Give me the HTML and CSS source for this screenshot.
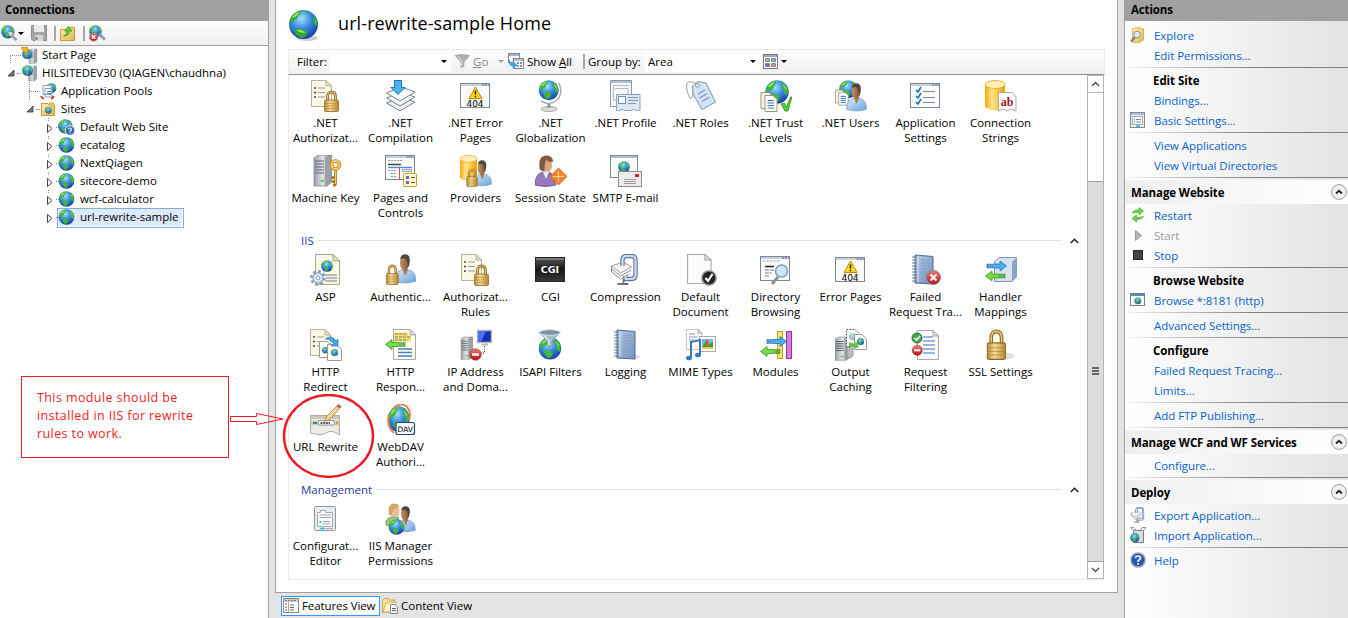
FILE: index.html
```html
<!DOCTYPE html>
<html lang="en">
<head>
<meta charset="utf-8">
<title>Internet Information Services (IIS) Manager</title>
<link rel="stylesheet" href="styles.css">
</head>
<body>
<svg class="defs" width="0" height="0">
  <defs>
    <radialGradient id="sea" cx=".42" cy=".3" r=".75"><stop offset="0" stop-color="#a4e2fb"/><stop offset=".45" stop-color="#3a8ce0"/><stop offset="1" stop-color="#1434a0"/></radialGradient>
    <linearGradient id="gold" x2="1"><stop offset="0" stop-color="#b48a36"/><stop offset=".4" stop-color="#f6dc94"/><stop offset="1" stop-color="#b88632"/></linearGradient>
    <linearGradient id="yel" x2="1"><stop offset="0" stop-color="#f2a90c"/><stop offset=".35" stop-color="#ffe68a"/><stop offset="1" stop-color="#eda000"/></linearGradient>
    <linearGradient id="steel" x2="1"><stop offset="0" stop-color="#9ba2a8"/><stop offset=".5" stop-color="#e3e6e9"/><stop offset="1" stop-color="#6e767c"/></linearGradient>
    <linearGradient id="skin" x2="1"><stop offset="0" stop-color="#c79366"/><stop offset="1" stop-color="#7d5230"/></linearGradient>
    <linearGradient id="shirt" x2="1" y2="1"><stop offset="0" stop-color="#d6eafb"/><stop offset="1" stop-color="#6ba3da"/></linearGradient>
    <linearGradient id="bk" x2="1" y2="1"><stop offset="0" stop-color="#b4c8e2"/><stop offset="1" stop-color="#7391bd"/></linearGradient>
    <linearGradient id="red" y2="1" x2="0"><stop offset="0" stop-color="#ee7a70"/><stop offset="1" stop-color="#b80f16"/></linearGradient>
    <linearGradient id="dark" y2="1" x2="0"><stop offset="0" stop-color="#5a5a5a"/><stop offset=".5" stop-color="#161616"/><stop offset="1" stop-color="#3a3a3a"/></linearGradient>
    <linearGradient id="fold" x2="1" y2="1"><stop offset="0" stop-color="#fff0b4"/><stop offset="1" stop-color="#e2b44c"/></linearGradient>
    <g id="globe"><circle cx="8" cy="8" r="7.800" fill="url(#sea)"/><path d="M1 5Q3 1 7 .6Q8 2.500 6 4Q6 6 4 6.500Q2.500 8 .8 8ZM4 9.500Q8 8.500 10 11Q9 14.500 7 15Q4 13.500 4 9.500ZM10.500 1.200Q14 3 15.200 6Q15.500 9 14.500 10.500Q12 9 12.500 6.500Q10.500 4 10.500 1.200Z" fill="#3fb83a"/><path d="M2 4.500Q4 1.500 6.500 1.400Q5 3.600 3.500 4.600ZM12 2.600Q14 4.500 14.500 6.500Q13 6 12 2.600Z" fill="#9be26c"/></g>
    <g id="lock"><path d="M4 10V6Q4 1 8 1T12 6V10" fill="none" stroke="#8c641c" stroke-width="2.800"/><path d="M4 10V6Q4 1 8 1T12 6V10" fill="none" stroke="#e8c878" stroke-width="1.200"/><rect x="1" y="9" width="14" height="11.500" rx="1.500" fill="url(#gold)" stroke="#8f6a26" stroke-width=".8"/><path d="M1.500 12.500H14.500M1.500 15H14.500M1.500 17.500H14.500" stroke="#b08840" stroke-width=".6"/></g>
    <g id="page"><path d="M.5.5H16L21.500 6V29.500H.5Z" fill="#fbfbfb" stroke="#a9a9a9"/><path d="M16 .5V6H21.500Z" fill="#dedede" stroke="#a9a9a9"/></g>
    <g id="listpage"><path d="M.5.5H15L20.500 6V26.500H.5Z" fill="#fbf7e6" stroke="#b9b29a"/><path d="M15 .5V6H20.500Z" fill="#e6dfc4" stroke="#b9b29a"/><path d="M3 8H5M3 12.500H5M3 17H5" stroke="#444" stroke-width="1.500"/><path d="M7 8H14M7 12.500H14M7 17H14" stroke="#999"/></g>
    <g id="person"><path d="M0 23Q0 15 7 13.500H14Q21 15 21 23Q10 26 0 23Z" fill="url(#shirt)" stroke="#5f8fc0" stroke-width=".6"/><path d="M7.500 12.500L10.500 18.500 13.500 12.500Z" fill="#a97a50"/><ellipse cx="9.800" cy="7.500" rx="4.500" ry="6.300" fill="url(#skin)"/><path d="M5.600 4.500Q6 .3 10.500.3Q15.800.6 15 6.500Q14.600 10 13.200 11.500Q13 6.500 11.500 4.500Q9 2.500 5.600 4.500Z" fill="#4c443f"/></g>
    <g id="server"><path d="M0 3L4 0H16V27L12 31H0Z" fill="url(#steel)" stroke="#697077" stroke-width=".6"/><path d="M10 3L16 0V27L10 31Z" fill="#9aa2a8"/><path d="M1 6H9M1 9H9M1 12H9M1 15H9M1 18H9" stroke="#5f666d" stroke-width="1.200"/><rect x="6" y="25" width="3" height="2" fill="#5fd33a"/></g>
    <g id="win"><rect x=".5" y=".5" width="29" height="24" fill="#fbfbfc" stroke="#7c8798"/><path d="M1 2H29" stroke="#c9d1de" stroke-width="2"/><path d="M22 2H24M25 2H27M28 2H29" stroke="#465a78"/></g>
    <g id="warn"><path d="M7 1L13.500 12.500H.5Z" fill="#ffd91e" stroke="#c28c00"/><path d="M7 4.500V8.500M7 9.800V11.300" stroke="#222" stroke-width="1.500"/></g>
    <g id="book"><path d="M3 1L21 2.500V30L3 29Z" fill="url(#bk)" stroke="#4f6a96"/><path d="M6 2V28" stroke="#dbe6f4"/><path d="M9 6H18M9 9H18M9 12H18M9 15H18M9 18H18M9 21H18" stroke="#86a0c8"/><path d="M0 3H5M0 6H5M0 9H5M0 12H5M0 15H5M0 18H5M0 21H5M0 24H5M0 27H5" stroke="#6d7888"/></g>
    <g id="arrR"><path d="M0 3.500H1.500V7.500H0ZM2.800 3.500H4.300V7.500H2.800ZM5.600 3.500H13V.5L19.500 5.500L13 10.500V7.500H5.600Z" fill="#46b2f2" stroke="#1467a8" stroke-width=".7"/></g>
    <g id="arrL"><path d="M20 3.500H18.500V7.500H20ZM17.200 3.500H15.700V7.500H17.200ZM14.400 3.500H7V.5L.5 5.500L7 10.500V7.500H14.400Z" fill="#74dc46" stroke="#2f8a18" stroke-width=".7"/></g>
    <g id="db"><path d="M0 4V27Q10 34 20 27V4Z" fill="url(#yel)"/><ellipse cx="10" cy="4.500" rx="10" ry="4" fill="#fff0b8" stroke="#e6a818" stroke-width=".8"/></g>
    <g id="clamp"><path d="M0 12L12 8L20 13L9 19Z" fill="#f6f6f6" stroke="#888" stroke-width=".8"/><path d="M0 12V15L9 22L20 16M0 15V18L9 25L18 20" fill="none" stroke="#888"/><path d="M11 12V6Q11 2 15 2H20Q24 2 24 6V21Q24 25 20 25H14V22" fill="none" stroke="#6079a0" stroke-width="4.400"/><path d="M11 12V6Q11 2 15 2H20Q24 2 24 6V21Q24 25 20 25H14V22" fill="none" stroke="#cfdcec" stroke-width="2.200"/><path d="M6 30H17M12 25V30" stroke="#6a7074" stroke-width="1.800"/></g>
    <g id="docs"><path d="M0 0H8L12 4V16H0Z" fill="#f8f4e4" stroke="#9e947b"/><path d="M4 3H12L16 7V19H4Z" fill="#fff" stroke="#9e947b"/><path d="M6.500 8H13M6.500 10.500H13M6.500 13H13M6.500 15.500H13" stroke="#3572b8" stroke-width="1.200"/></g>
    <g id="no"><circle cx="6" cy="6" r="5.800" fill="url(#red)" stroke="#9b1c1c" stroke-width=".5"/><path d="M2.500 6H9.500" stroke="#fff" stroke-width="2.400"/></g>
    <g id="cross"><circle cx="7" cy="7" r="7" fill="url(#red)" stroke="#888"/><path d="M4 4L10 10M10 4L4 10" stroke="#fff" stroke-width="2.200"/></g>
    <g id="cfg"><rect x=".5" y=".5" width="21" height="24" rx="1" fill="#e9ecef" stroke="#8e979f"/><path d="M3.500 6.500H6.500V4.500H11.500V6.500H18.500V20.500H3.500Z" fill="#fff" stroke="#a2abb4"/><path d="M5.500 9H17M5.500 11.500H17M8.500 15.500H16M8.500 18H16" stroke="#96a2ae"/><path d="M5.500 16H7" stroke="#17a6d8" stroke-width="2"/><path d="M6 22.500H11" stroke="#18bfe8" stroke-width="1.500"/><path d="M12 22.500H19" stroke="#aaa"/></g>
    <g id="coll"><circle cx="8" cy="8" r="7.400" fill="#f1f1f1" stroke="#9a9a9a"/><path d="M5 9.500L8 6.800L11 9.500" fill="none" stroke="#222" stroke-width="1.800"/></g>
    <g id="arrow-closed"><path d="M.5.5L5 4.500L.5 8.500Z" fill="#fff" stroke="#444"/></g>
    <g id="arrow-open"><path d="M6 0V6H0Z" fill="#777" stroke="#333" stroke-width=".8"/></g>
  </defs>
</svg>

<div class="app">
  <aside class="connections">
    <h2 class="pane-title">Connections</h2>
    <div class="conn-tools">
      <svg width="17" height="17" viewBox="0 0 17 17"><use href="#globe" transform="scale(.85)"/><path d="M10 10L15.500 15" stroke="#8ba0a8" stroke-width="2.500"/><path d="M6.500 7.500L10 6L12.500 9L9.500 12Z" fill="#cfd8da" stroke="#77888e" stroke-width=".7"/></svg>
      <i class="caret"></i>
      <svg class="save" width="16" height="16" viewBox="0 0 16 16"><path d="M.5.5H15.500V15.500H2L.5 14Z" fill="#a4a4a4" stroke="#8c8c8c"/><path d="M3 0H13V7H3Z" fill="#ececec"/><path d="M4 10H12V16H4Z" fill="#d5d5d5"/><path d="M5.500 12V15" stroke="#777" stroke-width="2"/></svg>
      <i class="sep"></i>
      <svg class="up" width="15" height="15" viewBox="0 0 15 15"><path d="M.5 3.500H6L8 1.500H14.500V14.500H.5Z" fill="url(#fold)" stroke="#c99b34"/><path d="M3.500 10Q7 9 7 5H4.500L8.500.5L12 5H9.500Q9 10 3.500 10Z" fill="#5cc935" stroke="#2e8a18" stroke-width=".6"/></svg>
      <i class="sep"></i>
      <svg class="del" width="17" height="17" viewBox="0 0 17 17"><use href="#globe" transform="scale(.8)"/><path d="M10 9L16 14.500" stroke="#8ba0a8" stroke-width="2.800"/><use href="#cross" transform="translate(.5 8) scale(.58)"/></svg>
    </div>
    <ul class="tree">
      <li class="lv0 root"><svg width="17" height="17" viewBox="0 0 17 17"><use href="#server" transform="translate(8 2) scale(.5 .47)"/><use href="#globe" transform="translate(1 2) scale(.64)"/><path d="M0 0.500H7L6.500 6L3 5Z" fill="#f7b522" stroke="#c17b0c" stroke-width=".7"/></svg><span>Start Page</span></li>
      <li class="lv0 open0"><svg class="tw" width="7" height="7" viewBox="0 0 7 7"><use href="#arrow-open"/></svg><svg width="17" height="17" viewBox="0 0 17 17"><use href="#server" transform="translate(7.500 1) scale(.5 .48)"/><use href="#globe" transform="translate(1 0) scale(.68)"/></svg><span>HILSITEDEV30 (QIAGEN\chaudhna)</span></li>
      <li class="lv1 pools"><svg width="17" height="17" viewBox="0 0 17 17"><use href="#globe" transform="translate(6 0) scale(.65)"/><path d="M3 2.500H11V11.500H3ZM5 5.500H12V14H5Z" fill="#f8fafc" stroke="#8aa0b8"/><path d="M7 8.500H11M7 10.500H11" stroke="#4d7fb5"/><path d="M1 13Q2 15.500 4 15.500M13.500 13Q13 15.500 11 15.500" fill="none" stroke="#d13a2e" stroke-width="2"/></svg><span>Application Pools</span></li>
      <li class="lv1 open1"><svg class="tw" width="7" height="7" viewBox="0 0 7 7"><use href="#arrow-open"/></svg><svg width="17" height="17" viewBox="0 0 17 17"><path d="M1.500 2.500H8L9 4H14.500V14.500H1.500Z" fill="url(#fold)" stroke="#c99b34"/><path d="M9 2.500H14" stroke="#e2b44c" stroke-width="2"/><use href="#globe" transform="translate(5 6) scale(.42)"/></svg><span>Sites</span></li>
      <li class="lv2"><svg class="tw" width="6" height="9" viewBox="0 0 6 9"><use href="#arrow-closed"/></svg><svg width="17" height="17" viewBox="0 0 17 17"><use href="#globe" transform="scale(.92)"/><circle cx="12" cy="11.500" r="4.800" fill="#3e68b8" stroke="#e8eefa"/><path d="M10.500 10.300Q10.500 9 12 9T13.500 10.400Q13.500 11 12 12V13M12 13.700V14.600" fill="none" stroke="#fff" stroke-width="1.100"/></svg><span>Default Web Site</span></li>
      <li class="lv2"><svg class="tw" width="6" height="9" viewBox="0 0 6 9"><use href="#arrow-closed"/></svg><svg width="17" height="17" viewBox="-.5 0 17 17"><use href="#globe"/></svg><span>ecatalog</span></li>
      <li class="lv2"><svg class="tw" width="6" height="9" viewBox="0 0 6 9"><use href="#arrow-closed"/></svg><svg width="17" height="17" viewBox="-.5 0 17 17"><use href="#globe"/></svg><span>NextQiagen</span></li>
      <li class="lv2"><svg class="tw" width="6" height="9" viewBox="0 0 6 9"><use href="#arrow-closed"/></svg><svg width="17" height="17" viewBox="-.5 0 17 17"><use href="#globe"/></svg><span>sitecore-demo</span></li>
      <li class="lv2"><svg class="tw" width="6" height="9" viewBox="0 0 6 9"><use href="#arrow-closed"/></svg><svg width="17" height="17" viewBox="-.5 0 17 17"><use href="#globe"/></svg><span>wcf-calculator</span></li>
      <li class="lv2 selected"><svg class="tw" width="6" height="9" viewBox="0 0 6 9"><use href="#arrow-closed"/></svg><svg width="17" height="17" viewBox="-.5 0 17 17"><use href="#globe"/></svg><span>url-rewrite-sample</span></li>
    </ul>
  </aside>

  <section class="center">
    <main class="home">
      <header class="home-head">
        <svg width="32" height="33" viewBox="0 0 32 33"><ellipse cx="19" cy="29" rx="11" ry="3" fill="#bbb" opacity=".7"/><g transform="translate(1 1)"><circle cx="14.500" cy="14.500" r="14.500" fill="url(#sea)"/><path d="M1 9Q5 1 13 .5Q12 4 9 6Q8 9 5 10Q2 13 .3 14ZM5 20Q10 16 19 22Q18 27 13 28Q6 26 5 20ZM19 .8Q21 2 20 4L16 2ZM25 6Q29 11 28.500 16Q24 16 24 11Z" fill="#35a832"/><path d="M3 8Q6 2 11 2Q8 6 4 8ZM8 20Q13 19 16 23Q11 23 8 20ZM26 9Q28 12 27 14Z" fill="#a0e468"/></g></svg>
        <h1>url-rewrite-sample Home</h1>
      </header>
      <div class="filter">
        <span class="f-label">Filter:</span>
        <span class="combo find"><i class="caret"></i></span>
        <svg class="funnel" width="15" height="14" viewBox="0 0 15 14"><path d="M0 1.500Q7 -.5 14.500 1.500L9 8V12.500L6 13.500V8Z" fill="#b0b0b0" stroke="#999" stroke-width=".6"/><path d="M3 2L7 7V12" stroke="#e6e6e6" fill="none"/></svg>
        <span class="go"><u>G</u>o</span>
        <i class="caret dim"></i>
        <svg class="all" width="16" height="16" viewBox="0 0 16 16"><rect x=".5" y=".5" width="11" height="9" fill="#fff" stroke="#7d8794"/><path d="M1 2H11" stroke="#a8b4c4" stroke-width="2"/><rect x="5.500" y="5.500" width="10" height="10" fill="#fff" stroke="#7d8794"/><path d="M6 7H15" stroke="#b6c1d0" stroke-width="2"/><path d="M9 10H11M12 10H14M9 13H11M12 13H14" stroke="#556ea8" stroke-width="1.600"/><path d="M1 7Q2 11 5 11V8.500L9 12L5 15.500V13Q1 13 1 7Z" fill="#38a6e6" stroke="#1878b8" stroke-width=".5"/></svg>
        <span class="show">Show <u>A</u>ll</span>
        <i class="sep"></i>
        <span class="by">Group by:</span>
        <span class="combo area">Area<i class="caret"></i></span>
        <svg class="view" width="15" height="15" viewBox="0 0 15 15"><rect x=".5" y=".5" width="14" height="14" fill="#fff" stroke="#70798a"/><path d="M1 2H14" stroke="#9aa8bd" stroke-width="2"/><path d="M2.500 4.500H6.500V7.500H2.500Z" fill="#b8c880" stroke="#888"/><path d="M8.500 4.500H12.500V7.500H8.500Z" fill="#77bce4" stroke="#888"/><path d="M2.500 9.500H6.500V12.500H2.500Z" fill="#7668c4" stroke="#888"/><path d="M8.500 9.500H12.500V12.500H8.500Z" fill="#e09078" stroke="#888"/></svg>
        <i class="caret"></i>
      </div>
      <div class="features">
        <div class="list">
          <div class="grid">
            <div class="item"><svg class="ic" viewBox="0 0 32 32"><use href="#listpage" x="1"/><use href="#lock" x="13.500" y="11"/></svg>.NET<br>Authorizat...</div>
            <div class="item"><svg class="ic" viewBox="0 0 32 32"><path d="M1.500 23L16 17L30 22L15 31Z" fill="#eceff2" stroke="#76818c"/><path d="M1.500 18L16 12L30 17L15 26Z" fill="#f6f8fa" stroke="#76818c"/><path d="M1.500 13L16 7L30 12L15 21Z" fill="#fff" stroke="#76818c"/><path d="M9.500 .5H16.500V7.500H20L13 14.500L6 7.500H9.500Z" fill="#4db4ec" stroke="#1878b8"/></svg>.NET<br>Compilation</div>
            <div class="item"><svg class="ic" viewBox="0 0 32 32"><use href="#win" y="3"/><use href="#warn" x="8.500" y="6"/><text x="15" y="27" class="n404">404</text></svg>.NET Error<br>Pages</div>
            <div class="item"><svg class="ic" viewBox="0 0 32 32"><ellipse cx="14" cy="29" rx="8" ry="2.500" fill="#d8dadc" stroke="#a9adb0"/><path d="M24 3Q29 14 21 21Q14 26 6 21" fill="none" stroke="#a9aeb3" stroke-width="1.500"/><path d="M14 24V28" stroke="#999" stroke-width="3"/><use href="#globe" transform="translate(3.500 0) scale(1.280)"/></svg>.NET<br>Globalization</div>
            <div class="item"><svg class="ic" viewBox="0 0 32 32"><path d="M.5.5H21.500V26.500H.5Z" fill="#f4f6f9" stroke="#8b95a3"/><path d="M1 2H21" stroke="#b4bfd0" stroke-width="2"/><path d="M3.500 5.500H20M5 8.500H18V20H3.500V5" fill="none" stroke="#b5bcc6"/><path d="M6.500 14.500H30V30.500H26L24 29L22 30.500H14L12 29L10 30.500H6.500Z" fill="#dde8f3" stroke="#8ea5bf"/><rect x="8.500" y="16.500" width="7" height="7" fill="#fff" stroke="#6e8eb5"/><path d="M18 17.500H28M18 20.500H28M18 23.500H26" stroke="#7c98bd"/></svg>.NET Profile</div>
            <div class="item"><svg class="ic" viewBox="0 0 32 32"><path d="M12 4Q3 -1 1.500 5Q1.500 12 5 18Q9 19 8 10" fill="none" stroke="#a3b1c0" stroke-width="1.200"/><path d="M7.500 6L13 1.500L21 3L30.500 22L17 29.500L8 14Z" fill="#d3e3f2" stroke="#7893b2" stroke-linejoin="round"/><circle cx="12.500" cy="5.500" r="1.800" fill="#fff" stroke="#7893b2"/><path d="M13 14L20 10M14.500 18L22 13.500M17 21.500L24.500 17" stroke="#7a93cb" stroke-width="1.300"/></svg>.NET Roles</div>
            <div class="item"><svg class="ic" viewBox="0 0 32 32"><use href="#globe" transform="translate(5 0) scale(1.500)"/><use href="#docs" x="1" y="12.500"/><path d="M21 24L24.500 23L26.500 27L30.500 17H32L28 31H25Z" fill="#53cf2d" stroke="#25801a" stroke-width=".7"/></svg>.NET Trust<br>Levels</div>
            <div class="item"><svg class="ic" viewBox="0 0 32 32"><use href="#globe" transform="translate(4 0) scale(1.150)"/><use href="#docs" transform="translate(.5 10) scale(.8)"/><use href="#person" transform="translate(11.500 3) scale(.95 1.140)"/></svg>.NET Users</div>
            <div class="item"><svg class="ic" viewBox="0 0 32 32"><use href="#win" y="3"/><path d="M6 10L8 12L11 7M6 16L8 18L11 13M6 22L8 24L11 19" fill="none" stroke="#1477b8" stroke-width="1.700"/><path d="M13 11.500H25M13 17.500H25M13 22.500H25" stroke="#7b8798"/></svg>Application<br>Settings</div>
            <div class="item"><svg class="ic" viewBox="0 0 32 32"><use href="#db"/><path d="M13.500 12.500H27L31 17V31L26 29L22 31L18 29L13.500 31Z" fill="#fff" stroke="#aaa"/><text x="22" y="26" class="ab">ab</text></svg>Connection<br>Strings</div>
            <div class="item"><svg class="ic" viewBox="0 0 32 32"><use href="#server" transform="translate(4 0) scale(1.100 1)"/><path d="M25.500 14V29L23.500 31M25 22.500H21.500M25 26.500H22" fill="none" stroke="#a66c0c" stroke-width="2.600"/><path d="M25.500 14V29" stroke="#f8c860" stroke-width="1.200"/><circle cx="25.500" cy="10" r="4" fill="none" stroke="#b87812" stroke-width="3.600"/><circle cx="25.500" cy="10" r="4" fill="none" stroke="#ffd169" stroke-width="2"/></svg>Machine Key</div>
            <div class="item"><svg class="ic" viewBox="0 0 32 32"><use href="#win"/><path d="M3 5.500H17M3 15.500H12M6 18.500H12M6 21.500H12" stroke="#999" stroke-dasharray="2 1"/><path d="M3 9.500H16" stroke="#444" stroke-width="1.500"/><path d="M3 12.500H27" stroke="#4a8df0" stroke-width="1.400"/><path d="M14.500 12V24" stroke="#ee4a40"/><rect x="17.500" y="14.500" width="9" height="2" fill="none" stroke="#9ac"/><rect x="18.500" y="18.500" width="13" height="13" rx="1" fill="#fff7cc" stroke="#c6a02c"/><path d="M21 22.500H24M21 27.500H24" stroke="#7864a8" stroke-width="3"/><path d="M26 22.500H30M26 27.500H30" stroke="#555"/></svg>Pages and<br>Controls</div>
            <div class="item"><svg class="ic" viewBox="0 0 32 32"><use href="#db" transform="scale(.85)"/><use href="#person" transform="translate(13 5) scale(.88 1.050)"/><use href="#lock" transform="translate(6 14) scale(.75 .85)"/></svg>Providers</div>
            <div class="item"><svg class="ic" viewBox="0 0 32 32"><path d="M0 30Q0 19 8 17L16 18L21 30Q10 33 0 30Z" fill="#9a76ba" stroke="#7a5899"/><path d="M8 17L11 24L14 17Z" fill="#eee"/><ellipse cx="12.500" cy="10" rx="4.500" ry="7" fill="#dba87c"/><path d="M5 15Q2 .5 12 .5Q18 1 18 7Q13 7.500 11 4.500Q9 10 9.500 16.500Z" fill="#7c5a44"/><path d="M23.500 13L32 21.500L23.500 30L15 21.500Z" fill="#f5852d" stroke="#c9601a" stroke-width=".8"/><path d="M23.500 16V27M18 21.500H29" stroke="#ffd3a4"/></svg>Session State</div>
            <div class="item"><svg class="ic" viewBox="0 0 32 32"><rect x=".5" y=".5" width="27" height="22" fill="#fbfcfd" stroke="#7d8797"/><path d="M1 2H27" stroke="#b3bfd1" stroke-width="2"/><use href="#globe" transform="translate(8 6) scale(.75)"/><rect x="8.500" y="16.500" width="23" height="15" fill="#ececec" stroke="#8c8c8c"/><rect x="25" y="19" width="4" height="3" fill="#d9222a"/><path d="M14 24.500H26M14 26.500H26M14 28.500H26" stroke="#999"/></svg>SMTP E-mail</div>
          </div>
          <div class="group-head"><span>IIS</span><i></i><svg width="9" height="6" viewBox="0 0 9 6"><path d="M.8 5L4.500 1.300L8.200 5" fill="none" stroke="#222" stroke-width="1.600"/></svg></div>
          <div class="grid">
            <div class="item"><svg class="ic" viewBox="0 0 32 32"><path d="M5.500 .5H23L29.500 7V30.500H5.500Z" fill="#fbf8e6" stroke="#aaa58e"/><path d="M23 .5V7H29.500Z" fill="#e6dfc4" stroke="#aaa58e"/><use href="#globe" transform="translate(11 6) scale(.75)"/><path d="M14 21H27M16 24H27M16 27H27" stroke="#7a7a98" stroke-width="1.200"/><circle cx="8" cy="24" r="6.600" fill="none" stroke="#7f9ec0" stroke-width="2.600" stroke-dasharray="2.600 2.580"/><circle cx="8" cy="24" r="5" fill="#e6eff8" stroke="#8fadcd" stroke-width="1.500"/><circle cx="8" cy="24" r="2" fill="#fff" stroke="#7f9ec0"/></svg>ASP</div>
            <div class="item"><svg class="ic" viewBox="0 0 32 32"><use href="#person" transform="translate(9.500 0) scale(1.020 1.180)"/><use href="#lock" transform="translate(.5 11) scale(.85 .95)"/></svg>Authentic...</div>
            <div class="item"><svg class="ic" viewBox="0 0 32 32"><use href="#listpage" x="1"/><use href="#lock" x="13.500" y="11"/></svg>Authorizat...<br>Rules</div>
            <div class="item"><svg class="ic" viewBox="0 0 32 32"><rect x=".5" y="3.500" width="29" height="24" fill="url(#dark)" stroke="#222"/><path d="M1 5H29" stroke="#777" stroke-width="2"/><text x="15" y="19" class="cgi">CGI</text></svg>CGI</div>
            <div class="item"><svg class="ic" viewBox="0 0 32 32"><use href="#clamp" x="1.500"/></svg>Compression</div>
            <div class="item"><svg class="ic" viewBox="0 0 32 32"><use href="#page" transform="translate(2 0) scale(1.120 1)"/><circle cx="24" cy="24" r="7" fill="#222" stroke="#888" stroke-width="1.600"/><path d="M20.500 24L23 27L27.500 20" fill="none" stroke="#fff" stroke-width="2.200"/></svg>Default<br>Document</div>
            <div class="item"><svg class="ic" viewBox="0 0 32 32"><use href="#win" y="2"/><path d="M3 7H20" stroke="#999" stroke-dasharray="2 1.500"/><path d="M5 12.500H14" stroke="#222" stroke-width="1.500"/><path d="M5 16H14M5 19H12M5 22H10" stroke="#777" stroke-dasharray="4 1"/><path d="M18 23L12 30" stroke="#8a929a" stroke-width="3"/><circle cx="21.500" cy="17" r="6" fill="#cfe8fb" stroke="#7f9cbd" stroke-width="1.600"/></svg>Directory<br>Browsing</div>
            <div class="item"><svg class="ic" viewBox="0 0 32 32"><use href="#win" y="3"/><use href="#warn" x="8.500" y="6"/><text x="15" y="27" class="n404">404</text></svg>Error Pages</div>
            <div class="item"><svg class="ic" viewBox="0 0 32 32"><use href="#book" x="2"/><use href="#cross" x="16.500" y="16.500"/></svg>Failed<br>Request Tra...</div>
            <div class="item"><svg class="ic" viewBox="0 0 32 32"><path d="M9.500 8L14 3.500H31.500V23L27 27.500H9.500Z" fill="#d6e2f2" stroke="#8495ad"/><path d="M27 8L31.500 3.500V23L27 27.500Z" fill="#8ba3c6"/><use href="#arrR" x="2" y="6.500"/><use href="#arrL" x="0" y="16.500"/></svg>Handler<br>Mappings</div>
            <div class="item"><svg class="ic" viewBox="0 0 32 32"><use href="#listpage"/><path d="M9.500 12.500H17L21 16V28.500H9.500Z" fill="#fff" stroke="#999"/><use href="#globe" transform="translate(12 18) scale(.4)"/><path d="M17.500 15.500H26L31.500 20V31.500H17.500Z" fill="#fff" stroke="#999"/><use href="#globe" transform="translate(21 20) scale(.45)"/><path d="M15 10Q22 5 26 12L28 10V17H21L23.500 14.500Q21 10 15 10Z" fill="#43a5e5" stroke="#2176ae" stroke-width=".6"/></svg>HTTP<br>Redirect</div>
            <div class="item"><svg class="ic" viewBox="0 0 32 32"><path d="M8.500.5H25L30.500 6V30.500H8.500Z" fill="#fffdf2" stroke="#aaa"/><path d="M25 .5V6H30.500Z" fill="#ddd" stroke="#aaa"/><path d="M9 5H23M9 8H26M9 11H26" stroke="#f7e169" stroke-width="3"/><path d="M10 5H22M10 8H26M10 11H22" stroke="#777" stroke-dasharray="3 1"/><path d="M13 20H27M13 23.500H27M13 27H27" stroke="#497eb9" stroke-width="1.300"/><use href="#arrL" y="10"/></svg>HTTP<br>Respon...</div>
            <div class="item"><svg class="ic" viewBox="0 0 32 32"><use href="#server" transform="translate(1 8) scale(.72)"/><path d="M17.500 1.500H31.500V13.500H17.500Z" fill="#1530b8" stroke="#b7b7b0" stroke-width="1.500"/><path d="M18 2H26L21 13H18Z" fill="#506df0"/><path d="M22 15.500H28" stroke="#bbb" stroke-width="2"/><path d="M24.500 17V24H18" fill="none" stroke="#222" stroke-dasharray="1 1.500"/><use href="#no" x="9.500" y="19.500"/></svg>IP Address<br>and Doma...</div>
            <div class="item"><svg class="ic" viewBox="0 0 32 32"><use href="#globe" transform="translate(3.500 8) scale(1.430)"/><path d="M4 3.500L12.500 12V17H17V12L25.500 3.500Z" fill="#a9bdcb" stroke="#7d95a6" stroke-width=".7"/><path d="M8 5L14 12V16" fill="none" stroke="#e4edf2" stroke-width="1.500"/><ellipse cx="14.700" cy="3.500" rx="10.500" ry="2.800" fill="#7b94a6" stroke="#dce6ec"/></svg>ISAPI Filters</div>
            <div class="item"><svg class="ic" viewBox="0 0 32 32"><ellipse cx="22" cy="28" rx="8" ry="2.500" fill="#e2e2e2"/><use href="#book" x="4"/></svg>Logging</div>
            <div class="item"><svg class="ic" viewBox="0 0 32 32"><use href="#page" transform="translate(1 0) scale(.75 .7)"/><path d="M4 5H10M4 8H12M4 11H9" stroke="#739dc9"/><rect x="14.500" y="7.500" width="16" height="15" fill="#fff" stroke="#aaa"/><path d="M17 10H28V19H17Z" fill="#70baf0"/><path d="M17 19L21 11L25 19ZM24 15L28 13V19H24Z" fill="#4a9b2d"/><path d="M21 10L24 13L21 17Z" fill="#e43"/><path d="M17 19H28" stroke="#efc93b" stroke-width="2"/><path d="M6 29V13L15 11V26" fill="none" stroke="#3e75bb" stroke-width="2"/><ellipse cx="4" cy="29" rx="3" ry="2.300" fill="#347bc8"/><ellipse cx="13" cy="26" rx="3" ry="2.300" fill="#347bc8"/></svg>MIME Types</div>
            <div class="item"><svg class="ic" viewBox="0 0 32 32"><rect x="17.500" y="2.500" width="5" height="27" fill="#fde47d" stroke="#c79a1c"/><rect x="26.500" y="2.500" width="5" height="27" fill="#d57ddd" stroke="#9a319f"/><use href="#arrR" x="7" y="7"/><use href="#arrL" y="17"/></svg>Modules</div>
            <div class="item"><svg class="ic" viewBox="0 0 32 32"><use href="#server" transform="translate(0 8) scale(.95 .75)"/><path d="M11.500.5H20L24 4V17.500H11.500Z" fill="#fff" stroke="#444" stroke-dasharray="1.500 1.500"/><use href="#globe" transform="translate(14 4) scale(.45)" opacity=".5"/><path d="M19.500 5.500H27L31.500 10V20.500H19.500Z" fill="#fff" stroke="#999"/><use href="#globe" transform="translate(22 9) scale(.45)"/><path d="M14 13L20 15L21 12L24 18L18 20L19 18L14 17Z" fill="#5cc83a"/><path d="M12 18L18 19V27Q15 30 12 29Z" fill="#bbb" stroke="#888" stroke-width=".7"/></svg>Output<br>Caching</div>
            <div class="item"><svg class="ic" viewBox="0 0 32 32"><use href="#page" x="7" y="1"/><path d="M13 8H23M13 12H25M13 16H25M13 20H25M13 24H25" stroke="#3e74c4" stroke-width="1.200"/><circle cx="7" cy="9" r="5" fill="#4aa34e" stroke="#31763a"/><path d="M4.500 9L6.500 11L10 7" fill="none" stroke="#fff" stroke-width="1.600"/><use href="#no" transform="translate(2 16) scale(.88)"/></svg>Request<br>Filtering</div>
            <div class="item"><svg class="ic" viewBox="0 0 32 32"><ellipse cx="23" cy="27" rx="7" ry="3" fill="#e2e2e2"/><use href="#lock" transform="translate(1 1) scale(1.300 1.430)"/></svg>SSL Settings</div>
            <div class="item"><svg class="ic" viewBox="0 0 32 32"><path d="M.5 11.500H29.500V31Q22 25 16 29Q9 32 6 30L.5 29Z" fill="#ebebea" stroke="#999" stroke-width=".8"/><path d="M1 13.500H29" stroke="#c8c8b9" stroke-width="3"/><path d="M1 19H29" stroke="#d6d0ac" stroke-width="5"/><path d="M8.500 16.500H24V21H8.500Z" fill="#fff" stroke="#999"/><path d="M10.500 19H20" stroke="#222" stroke-width="1.500" stroke-dasharray="2 .7"/><path d="M3 19H7" stroke="#3b7cc0" stroke-width="2"/><path d="M26 18.500H28" stroke="#e3a21e" stroke-width="3"/><path d="M14.500 17.500L17 12L27 2L30 4L20 15Z" fill="#f9d68c" stroke="#9e7838" stroke-width=".8"/><path d="M27 2L29 .5L31 2.500L30 4Z" fill="#e16674" stroke="#555" stroke-width=".6"/></svg>URL Rewrite</div>
            <div class="item"><svg class="ic" viewBox="0 0 32 32"><use href="#globe" transform="translate(2.500 2) scale(1.400 1.650)"/><path d="M8 5Q14 -2 21 2Q27 8 24 16M4 10Q1 22 9 29" fill="none" stroke="#e58450" stroke-width="2"/><rect x="11" y="18.500" width="18.500" height="12" rx="2" fill="#f4f9fd" stroke="#234a66" stroke-width="1.200"/><text x="20.300" y="27.500" class="dav">DAV</text></svg>WebDAV<br>Authori...</div>
          </div>
          <div class="group-head"><span>Management</span><i></i><svg width="9" height="6" viewBox="0 0 9 6"><path d="M.8 5L4.500 1.300L8.200 5" fill="none" stroke="#222" stroke-width="1.600"/></svg></div>
          <div class="grid">
            <div class="item"><svg class="ic" viewBox="0 0 32 32"><use href="#cfg" x="4" y="3"/></svg>Configurat...<br>Editor</div>
            <div class="item"><svg class="ic" viewBox="0 0 32 32"><path d="M1 22Q0 15 7 14H13L15 23Q8 26 1 22Z" fill="#9cc782" stroke="#74a05a"/><ellipse cx="10" cy="8" rx="4.500" ry="6.500" fill="#e8bd94"/><path d="M4 12Q2 .5 9 .5Q15 .5 13.500 4.500Q8 3.500 6.500 13Z" fill="#d0aa62"/><use href="#person" transform="translate(11 3) scale(.92 1.050)"/><use href="#globe" transform="translate(3.500 16)"/></svg>IIS Manager<br>Permissions</div>
          </div>
        </div>
        <div class="scroll">
          <div class="sbtn"><svg width="9" height="6" viewBox="0 0 9 6"><path d="M1 5L4.500 1.500L8 5" fill="none" stroke="#555" stroke-width="1.500"/></svg></div>
          <div class="track"></div>
          <div class="thumb"><i></i><i></i><i></i></div>
          <div class="sbtn"><svg width="9" height="6" viewBox="0 0 9 6"><path d="M1 1L4.500 4.500L8 1" fill="none" stroke="#555" stroke-width="1.500"/></svg></div>
        </div>
      </div>
    </main>
    <nav class="tabs">
      <span class="tab active"><svg width="16" height="15" viewBox="0 0 16 15"><rect x=".5" y=".5" width="15" height="14" fill="#fff" stroke="#888"/><path d="M1 2.500H15" stroke="#ccc" stroke-width="3"/><path d="M2 2.500H14" stroke="#777" stroke-dasharray="2 1"/><path d="M5.500 4V14" stroke="#aaa"/><path d="M2 6H4M2 9H4M2 12H4M7 7H11M7 9.500H11M7 12H11" stroke="#666"/></svg>Features View</span>
      <span class="tab"><svg width="16" height="16" viewBox="0 0 16 16"><path d="M.5 2.500L2 .5H6L7 2H12.500V14.500H.5Z" fill="url(#fold)" stroke="#c9a860"/><path d="M4 5L14 4L12 14H1Z" fill="#fdf0c4" stroke="#c9a860" stroke-width=".7"/><path d="M8.500 6.500H13L15.500 9V15.500H8.500Z" fill="#fff" stroke="#7a8fa5"/><path d="M10 10.500H14M10 12.500H14" stroke="#557"/></svg>Content View</span>
    </nav>
  </section>

  <aside class="actions">
    <h2 class="pane-title">Actions</h2>
    <div class="act-list">
      <a class="act"><svg viewBox="0 0 16 16"><path d="M2.500 1.500L9 .5L13.500 2V13L9 15.500H2.500Z" fill="url(#fold)" stroke="#d0aa50" stroke-width=".8"/><path d="M5 10L1 14.500" stroke="#777" stroke-width="2"/><circle cx="7" cy="7.500" r="3.300" fill="#dceefa" stroke="#8593a0"/></svg>Explore</a>
      <a class="act">Edit Permissions...</a>
      <hr>
      <b class="act">Edit Site</b>
      <a class="act">Bindings...</a>
      <a class="act"><svg viewBox="0 0 16 16"><rect x=".5" y=".5" width="14" height="15" fill="#edf0f3" stroke="#888"/><path d="M1 2H14" stroke="#b6becb" stroke-width="2"/><rect x="2.500" y="4.500" width="10" height="8" fill="#fff" stroke="#aab"/><path d="M6 7.500H11M6 10H11" stroke="#789"/><path d="M4 7.500H5M4 10H5M6 14H10" stroke="#18bfe8" stroke-width="1.500"/></svg>Basic Settings...</a>
      <hr>
      <a class="act">View Applications</a>
      <a class="act">View Virtual Directories</a>
      <hr>
      <h3>Manage Website<svg viewBox="0 0 16 16"><use href="#coll"/></svg></h3>
      <a class="act"><svg viewBox="0 0 16 16"><path d="M2 6Q5 2 9 3V.5L13.500 4L9 8V5.500Q5 5 2 6ZM13.500 9.500Q11 13 6.500 12.500V15L2 11.500L6.500 8V10.500Q10 10.500 13.500 9.500Z" fill="#6ad648" stroke="#379b24" stroke-width=".6"/></svg>Restart</a>
      <a class="act off"><svg viewBox="0 0 16 16"><path d="M5.500 3.500L11.500 8.500L5.500 13.500Z" fill="#b4b4b4" stroke="#999"/></svg>Start</a>
      <a class="act"><svg viewBox="0 0 16 16"><rect x="3.500" y="3.500" width="9" height="9" fill="#444" stroke="#222"/></svg>Stop</a>
      <hr>
      <b class="act">Browse Website</b>
      <a class="act"><svg viewBox="0 0 16 16"><rect x=".5" y="1.500" width="14" height="12" fill="#fff" stroke="#6c8399"/><path d="M1 3H14" stroke="#5f89b8" stroke-width="2"/><use href="#globe" transform="translate(4.300 5.300) scale(.44)"/></svg>Browse *:8181 (http)</a>
      <hr>
      <a class="act">Advanced Settings...</a>
      <hr>
      <b class="act">Configure</b>
      <a class="act">Failed Request Tracing...</a>
      <a class="act">Limits...</a>
      <hr>
      <a class="act">Add FTP Publishing...</a>
      <hr>
      <h3>Manage WCF and WF Services<svg viewBox="0 0 16 16"><use href="#coll"/></svg></h3>
      <a class="act">Configure...</a>
      <hr>
      <h3>Deploy<svg viewBox="0 0 16 16"><use href="#coll"/></svg></h3>
      <a class="act"><svg viewBox="0 0 16 16"><use href="#clamp" transform="translate(1 0) scale(.5)"/></svg>Export Application...</a>
      <a class="act"><svg viewBox="0 0 16 16"><path d="M3.500 3.500H13.500V15.500H3.500Z" fill="#dcdce8" stroke="#7b7b98"/><path d="M3.500 3.500L.5.5H4L6 3.500ZM13.500 3.500L16 .5H12L10 3.500Z" fill="#eee" stroke="#7b7b98" stroke-width=".7"/><use href="#globe" transform="translate(0 6) scale(.6)"/></svg>Import Application...</a>
      <hr>
      <a class="act"><svg viewBox="0 0 16 16"><circle cx="8" cy="8" r="7" fill="#2856b5" stroke="#939dac" stroke-width="1.500"/><path d="M5.500 6.300Q5.500 4 8 4T10.500 6.300Q10.500 7.500 8.200 8.500V10M8.200 11V12.700" fill="none" stroke="#fff" stroke-width="1.700"/></svg>Help</a>
    </div>
  </aside>

  <p class="note">This module should be<br>installed in IIS for rewrite<br>rules to work.</p>
  <svg class="marks" width="150" height="90" viewBox="0 0 150 90"><path d="M.5 22.500H26.500V19.500L53 25L26.500 30.500V27.500H.5Z" fill="none" stroke="#ed1c24"/><ellipse cx="98.500" cy="42" rx="44.500" ry="41" fill="none" stroke="#ed1c24" stroke-width="2.400"/></svg>
</div>
</body>
</html>
```
FILE: styles.css
```css
* { box-sizing: border-box; }
body { margin: 0; font: 11.5px/15px "Open Sans", "Noto Sans", sans-serif; color: #000; background: #e3e3e3; overflow: hidden; }
.defs { position: absolute; }
.app { position: relative; display: flex; width: 1348px; height: 618px; }
h1, h2, h3, p, ul { margin: 0; padding: 0; }
svg { flex: none; display: block; }

.pane-title { height: 21px; padding-left: 5px; font-size: 11.5px; line-height: 20px; font-weight: 700; background: #a0a0a0; letter-spacing: -.15px; }
.caret { flex: none; width: 0; height: 0; border: 3px solid transparent; border-top-color: #000; border-bottom: 0; }
.caret.dim { border-top-color: #999; }
.sep { flex: none; width: 2px; height: 15px; background: #a6a6a6; }

/* Connections pane */
.connections { width: 269px; background: #fff; border-right: 1px solid #a0a0a0; letter-spacing: -.04px; }
.conn-tools { display: flex; align-items: center; height: 25px; padding-left: 1px; background: linear-gradient(#fdfdfd, #f0f0f0); border-bottom: 1px solid #a0a0a0; }
.conn-tools .save { margin: 0 7px 0 7px; }
.conn-tools .up { margin: 0 8px 0 4px; }
.conn-tools .del { margin-left: 4px; }
.tree { list-style: none; }
.tree li { position: relative; display: flex; align-items: center; height: 18px; white-space: nowrap; background: repeating-linear-gradient(#8a8a8a 0 1px, #fff 1px 2px) no-repeat; background-size: 1px 0; }
.tree li::before { content: ""; flex: none; height: 0; border-top: 1px dotted #8a8a8a; }
.tree li > svg { order: 2; }
.tree li > .tw { order: 0; }
.tree li > span { order: 3; padding-left: 4px; line-height: 18px; height: 18px; }
.tree .lv0 > span, .tree .lv1 > span { margin-top: -1px; }
.tree .root { background-position: 10px 10px; background-size: 1px 8px; }
.tree .root::before { width: 11px; margin-left: 10px; }
.tree .open0::before { width: 4px; order: 1; margin: 0 0 0 2px; }
.tree .open0 .tw { margin-left: 8px; }
.tree .pools { background-position: 29px 0; background-size: 1px 18px; }
.tree .lv1::before { width: 11px; margin-left: 29px; }
.tree .open1::before { width: 4px; order: 1; margin: 0 0 0 2px; }
.tree .open1 .tw { margin-left: 27px; }
.tree .lv2 { background-position: 48px 0; background-size: 1px 4px; }
.tree .lv2::before { width: 3px; order: 1; margin: 0 -1px 0 3px; }
.tree .lv2 .tw { margin: 3px 0 0 47px; }
.tree .lv2 > span { padding-left: 5px; }
.tree .selected { background: linear-gradient(#ddeafc, #ddeafc) 57px 0 / 125px 18px no-repeat; }
.tree .selected::after { content: ""; position: absolute; left: 57px; top: 0; width: 125px; height: 18px; border: 1px solid #84acdd; }

/* Centre pane */
.center { width: 855px; padding-left: 6px; }
.home { height: 593px; width: 843px; padding: 0 13px 0 12px; background: #fff; border: 1px solid #a0a0a0; border-top: 0; }
.home-head { display: flex; height: 49px; }
.home-head svg { margin: 9px 0 0 0; }
.home-head h1 { margin: 9px 0 0 18px; font-size: 18px; line-height: 28px; font-weight: 400; letter-spacing: .1px; white-space: nowrap; }
.filter { display: flex; align-items: center; width: 817px; height: 26px; padding: 0 0 2px 8px; border: 1px solid #ebebeb; border-bottom-color: #909090; background: linear-gradient(#fdfdfd, #f0f0f0); white-space: nowrap; }
.filter > span, .filter > .caret { flex: none; }
.f-label { width: 33px; }
.combo { display: flex; align-items: center; height: 22px; background: #fff; }
.combo .caret { margin-left: auto; }
.find { width: 121px; padding-right: 4px; }
.funnel { margin-left: 4px; }
.go { width: 26px; margin-left: 3px; color: #888; }
.filter .dim { margin-left: -1px; }
.all { margin-left: 4px; }
.show { width: 56px; margin-left: 3px; letter-spacing: -.05px; }
.by { width: 57px; margin-left: 3px; }
.area { width: 115px; padding: 0 4px 0 3px; margin-right: 3px; }
.filter .view { margin-right: 3px; }
.features { display: flex; width: 816px; height: 505px; border: 1px solid #ebebeb; border-top: 0; border-right: 0; }
.list { flex: 1; padding-top: 5px; }
.grid { display: grid; grid-template-columns: repeat(10, 75px); grid-auto-rows: 75px; margin-left: -1px; }
.item { text-align: center; white-space: nowrap; }
.ic { width: 32px; height: 32px; margin: 0 0 3px 22px; }
.group-head { display: flex; align-items: center; height: 24px; padding: 0 8px 3px 12px; color: #1e3c9c; }
.group-head i { flex: 1; height: 1px; margin: 0 8px 0 4px; background: #dbe7f3; }
.n404 { font: 9px "DejaVu Sans", sans-serif; text-anchor: middle; }
.ab { font: bold 12px "Liberation Serif", serif; fill: #a01418; text-anchor: middle; }
.cgi { font: bold 9.5px "DejaVu Sans", sans-serif; fill: #fff; text-anchor: middle; }
.dav { font: 7.5px "DejaVu Sans", sans-serif; text-anchor: middle; }

.scroll { display: flex; flex-direction: column; width: 17px; border: 1px solid #b4b4b4; }
.sbtn { display: flex; align-items: center; justify-content: center; height: 16px; }
.track { height: 89px; border-top: 1px solid #b4b4b4; }
.thumb { flex: 1; display: flex; flex-direction: column; align-items: center; justify-content: center; gap: 1px; padding-bottom: 1px; background: #dcdcdc; border-top: 1px solid #a0a0a0; border-bottom: 1px solid #a0a0a0; }
.thumb i { width: 7px; height: 2px; background: #666; }

.tabs { display: flex; padding: 3px 0 0 6px; }
.tab { display: flex; align-items: center; height: 20px; padding: 0 0 1px 2px; white-space: nowrap; }
.tab svg { margin-right: 3px; }
.tab.active { width: 99px; background: #fff; border: 1px solid #3399ff; padding-left: 1px; letter-spacing: -.1px; }

/* Actions pane */
.actions { width: 224px; border-left: 1px solid #a0a0a0; background: linear-gradient(90deg, #fff, #e3e3e3); letter-spacing: -.05px; }
.actions .pane-title { padding-left: 6px; }
.act-list { padding-top: 5px; }
.act { display: flex; align-items: center; height: 20px; padding: 0 0 2px 29px; color: #0763c5; white-space: nowrap; }
.act svg { width: 16px; height: 16px; margin: 0 8px 0 -24px; }
b.act { padding-left: 28px; color: #000; }
.act.off { color: #9a9a9a; }
.act-list hr { height: 1px; margin: 1px 0 3px 2px; border: 0; background: linear-gradient(90deg, rgba(128,128,128,.1), #808080 60%); }
.act-list h3 { display: flex; align-items: center; justify-content: space-between; height: 24px; margin: -1px 0 2px; padding: 0 1px 0 6px; font-size: 11.5px; letter-spacing: -.1px; background: linear-gradient(90deg, #efefef, #fff); }
.act-list h3 svg { width: 16px; height: 16px; }

/* Red callout drawn over both panes */
.note { position: absolute; left: 21px; top: 376px; width: 208px; height: 82px; padding: 12px 15px; border: 1px solid #ed1c24; color: #ed1c24; font-size: 12.5px; line-height: 18px; letter-spacing: .4px; white-space: nowrap; }
.marks { position: absolute; left: 230px; top: 394px; }
```
